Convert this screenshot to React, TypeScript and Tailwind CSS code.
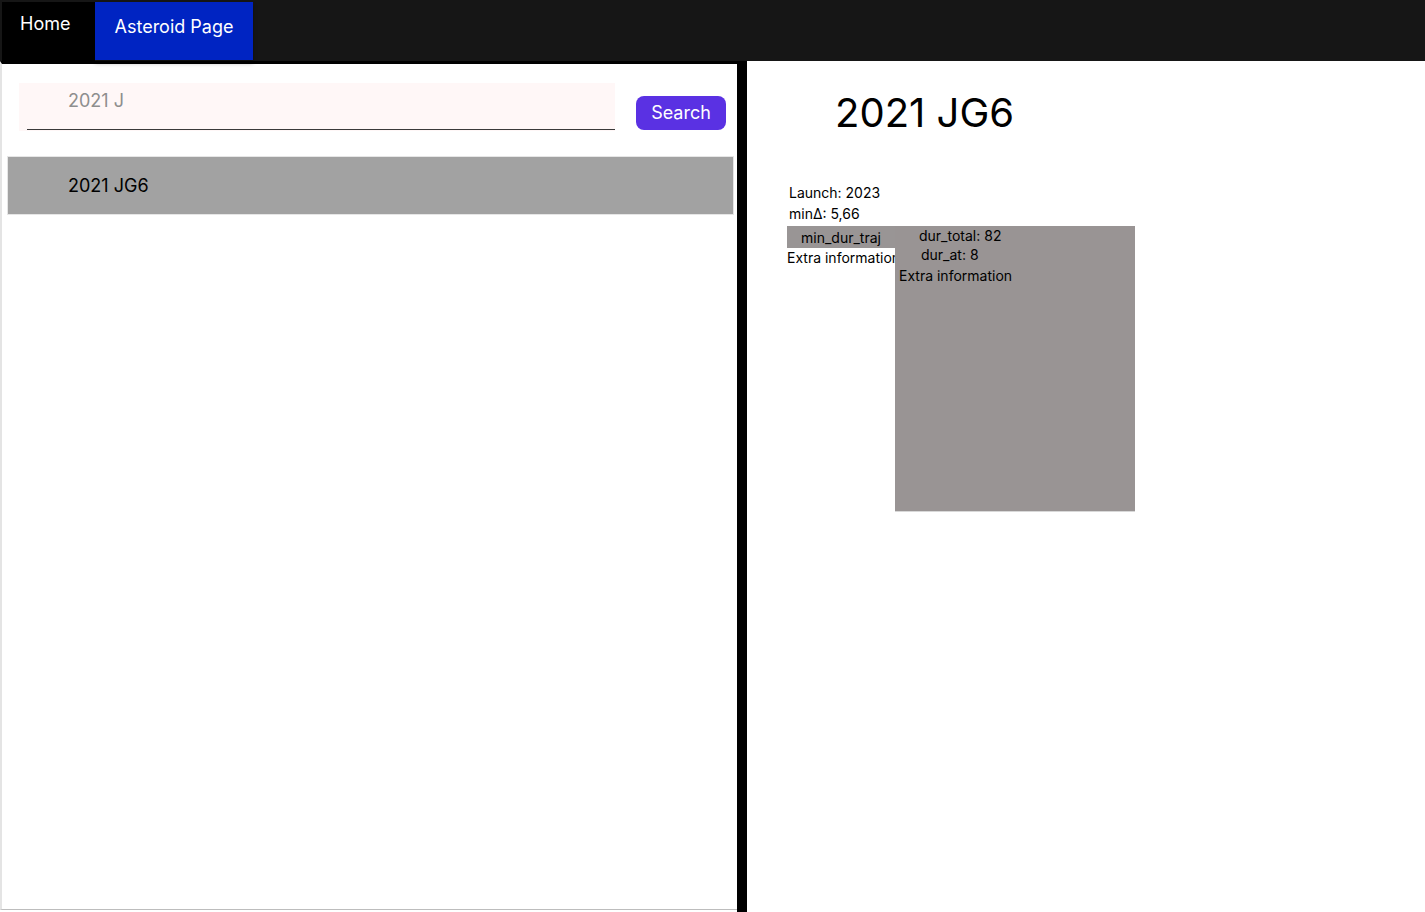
import { useState } from "react"

const font = { fontFamily: "Inter, 'Noto Sans', sans-serif" }

function TopBar() {
  return (
    <div className="flex h-[61px] bg-[#161616] pl-[2px] pt-[2px]">
      <div className="flex w-[93px] items-start bg-black pl-[18px] pt-[8px] text-[18px] leading-[28px] text-white">Home</div>
      <div className="flex h-[58px] w-[158px] items-start justify-center bg-[#0024c2] pt-[11px] text-[18px] leading-[28px] text-white shadow-[0_3px_4px_rgba(0,0,0,0.35)]">
        Asteroid Page
      </div>
    </div>
  )
}

function SearchPanel() {
  const [query, setQuery] = useState("")
  return (
    <div className="flex h-[849px] w-[737px] flex-col border-t-[3px] border-b border-l-[2px] border-t-black border-b-[#bdbdbd] border-l-[#e4e4e4]">
      <div className="flex items-start pl-[17px] pt-[19px]">
        <div className="h-[48px] w-[596px] bg-[#fff7f7] pl-[8px]">
          <input
            value={query}
            onChange={(e) => setQuery(e.target.value)}
            placeholder="2021 J"
            className="h-[47px] w-[588px] border-b border-[#3a3a3a] bg-transparent pb-[12px] pl-[41px] text-[18px] text-black outline-none placeholder:text-[#8e8e8e]"
          />
        </div>
        <button className="ml-[21px] mt-[13px] h-[34px] w-[90px] rounded-lg bg-[#5a31e3] pb-[1px] text-[18px] leading-[28px] text-white">Search</button>
      </div>
      <div className="ml-[5px] mt-[25px] flex h-[59px] w-[727px] items-center border border-[#e6e6e6] bg-[#a2a2a2] pl-[60px] text-[18px] text-black">
        2021 JG6
      </div>
    </div>
  )
}

function DetailPanel() {
  return (
    <div className="flex flex-1 flex-col pt-[28px]">
      <h1 className="pl-[88px] text-[40px] leading-[48px] text-black">2021 JG6</h1>
      <div className="mt-[45px] flex flex-col pl-[42px] text-[14px] leading-[21px] text-black">
        <span>Launch: 2023</span>
        <span>minΔ: 5,66</span>
      </div>
      <div className="mt-[2px] flex pl-[40px] text-[14px] text-black">
        <div className="flex w-[108px] flex-col">
          <div className="flex h-[22px] items-center justify-center bg-[#999595]">min_dur_traj</div>
          <div className="overflow-hidden whitespace-nowrap leading-[20px]">Extra information</div>
        </div>
        <div className="flex h-[286px] w-[240px] flex-col border-b border-[#d8d8d8] bg-[#999494] leading-[19px]">
          <span className="pl-[24px]">dur_total: 82</span>
          <span className="pl-[26px]">dur_at: 8</span>
          <span className="mt-[2px] pl-[4px]">Extra information</span>
        </div>
      </div>
    </div>
  )
}

export default function App() {
  return (
    <div className="h-[912px] w-[1425px] overflow-hidden bg-white" style={font}>
      <TopBar />
      <div className="flex">
        <SearchPanel />
        <div className="h-[851px] w-[10px] bg-black" />
        <DetailPanel />
      </div>
    </div>
  )
}
